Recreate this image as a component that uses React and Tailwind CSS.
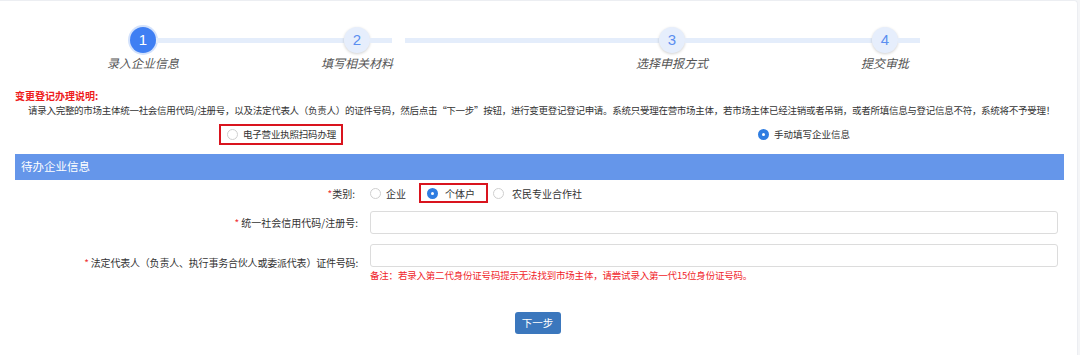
import React from "react";

const font = { fontFamily: '"Noto Sans CJK SC", "Noto Sans", sans-serif' };

function Step({ n, label, active }) {
  return (
    <div className="flex flex-col items-center w-[26px]">
      <div
        className={
          active
            ? "w-[26px] h-[26px] rounded-full bg-[#3f7ff3] text-white flex items-center justify-center text-[15px] ring-2 ring-[#d3e2fc]"
            : "w-[26px] h-[26px] rounded-full bg-[#e6eefc] text-[#5b8ef0] flex items-center justify-center text-[15px] shadow-[0_1px_3px_rgba(0,0,0,0.18)]"
        }
        style={{ fontFamily: '"Liberation Sans", Arial, sans-serif' }}
      >
        {n}
      </div>
      <div className="mt-[3px] whitespace-nowrap italic text-[12px] leading-[14px] text-[#555]">{label}</div>
    </div>
  );
}

function Radio({ checked }) {
  return checked ? (
    <span className="inline-block shrink-0 w-[11px] h-[11px] rounded-full bg-[#2f7de1] border-[3px] border-[#2f7de1] relative">
      <span className="absolute inset-[1px] rounded-full bg-white" />
    </span>
  ) : (
    <span className="inline-block shrink-0 w-[11px] h-[11px] rounded-full border border-[#cfcfcf] bg-white" />
  );
}

export default function App() {
  return (
    <div className="w-[1080px] h-[355px] bg-[#f4f5f7] pr-[2px] overflow-hidden" style={font}>
      <div className="h-[355px] bg-white border-t border-r border-[#eceef2] rounded-tr-[4px]">
        {/* steps */}
        <div className="flex items-start pt-[26px] h-[80px]">
          <div className="w-[130px]" />
          <Step n="1" label="录入企业信息" active />
          <div className="w-[188px] h-[5px] mt-[11px] bg-[#e4edfb]" />
          <Step n="2" label="填写相关材料" />
          <div className="w-[22px] h-[5px] mt-[11px] bg-[#e4edfb]" />
          <div className="w-[13px]" />
          <div className="w-[254px] h-[5px] mt-[11px] bg-[#e4edfb]" />
          <Step n="3" label="选择申报方式" />
          <div className="w-[187px] h-[5px] mt-[11px] bg-[#e4edfb]" />
          <Step n="4" label="提交审批" />
          <div className="w-[22px] h-[5px] mt-[11px] bg-[#e4edfb]" />
        </div>

        {/* instructions */}
        <div className="pl-[15px] pt-[8px]">
          <div className="text-[10px] leading-[14px] font-bold text-[#ee1c1c]">变更登记办理说明:</div>
          <div className="pl-[13px] text-[9.5px] leading-[14px] tracking-[-0.28px] text-[#333] whitespace-nowrap">
            请录入完整的市场主体统一社会信用代码/注册号，以及法定代表人（负责人）的证件号码，然后点击“下一步”按钮，进行变更登记登记申请。系统只受理在营市场主体，若市场主体已经注销或者吊销，或者所填信息与登记信息不符，系统将不予受理！
          </div>
        </div>

        {/* mode radios */}
        <div className="flex items-center h-[21px] mt-[7px]">
          <div className="w-[219px]" />
          <div className="w-[124px] h-[21px] border-2 border-[#d9141e] flex items-center pl-[6px] gap-[5px] text-[9.5px] tracking-[-0.2px] text-[#333] whitespace-nowrap">
            <Radio />
            <span>电子营业执照扫码办理</span>
          </div>
          <div className="w-[415px]" />
          <div className="flex items-center gap-[5px] text-[9.5px] text-[#333] whitespace-nowrap">
            <Radio checked />
            <span>手动填写企业信息</span>
          </div>
        </div>

        {/* header bar */}
        <div className="ml-[15px] mr-[13px] mt-[9px] h-[26px] bg-[#6596ea] flex items-center pl-[6px] text-[11.5px] text-white">
          待办企业信息
        </div>

        {/* type row */}
        <div className="flex items-center h-[20px] mt-[3px] text-[10px] text-[#333]">
          <div className="w-[358px] text-right pr-[3px]">
            <span className="text-[#e33]">*</span>类别:
          </div>
          <div className="w-[12px]" />
          <div className="flex items-center gap-[5px]">
            <Radio />
            <span>企业</span>
          </div>
          <div className="w-[13px]" />
          <div className="w-[69px] h-[20px] border-2 border-[#d9141e] flex items-center pl-[6px] gap-[7px]">
            <Radio checked />
            <span>个体户</span>
          </div>
          <div className="w-[5px]" />
          <div className="flex items-center gap-[8px]">
            <Radio />
            <span>农民专业合作社</span>
          </div>
        </div>

        {/* code row */}
        <div className="flex items-center mt-[8px] text-[10px] text-[#333]">
          <div className="w-[370px] text-right pr-[12px]">
            <span className="text-[#e33]">*</span> 统一社会信用代码/注册号:
          </div>
          <div className="w-[688px] h-[23px] border border-[#dcdcdc] rounded-[3px]" />
        </div>

        {/* id row */}
        <div className="flex items-start mt-[10px] text-[10px] text-[#333]">
          <div className="w-[370px] text-right pr-[12px] pt-[11px] tracking-[-0.2px]">
            <span className="text-[#e33]">*</span> 法定代表人（负责人、执行事务合伙人或委派代表）证件号码:
          </div>
          <div className="flex flex-col">
            <div className="w-[688px] h-[23px] border border-[#dcdcdc] rounded-[3px]" />
            <div className="mt-[1px] text-[9.5px] leading-[14px] tracking-[-0.2px] text-[#f0242a]">
              备注：若录入第二代身份证号码提示无法找到市场主体，请尝试录入第一代15位身份证号码。
            </div>
          </div>
        </div>

        {/* button */}
        <div className="flex justify-center mt-[30px] pr-[2px]">
          <div className="w-[46px] h-[22px] bg-[#3b77bd] rounded-[3px] text-white text-[10.5px] flex items-center justify-center">
            下一步
          </div>
        </div>
      </div>
    </div>
  );
}
